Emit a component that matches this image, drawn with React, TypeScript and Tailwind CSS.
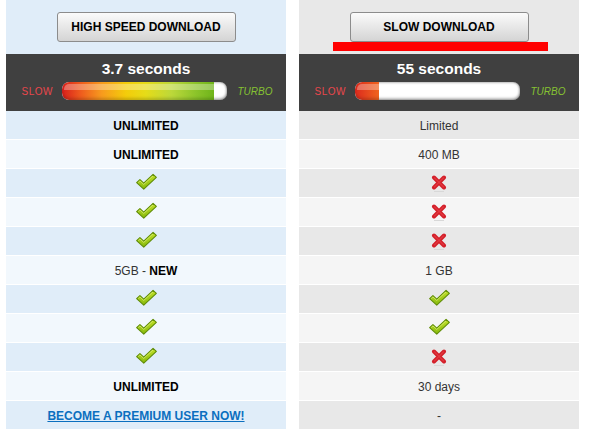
import React from "react";

type Cell =
  | { kind: "bold"; text: string }
  | { kind: "plain"; text: string }
  | { kind: "new" }
  | { kind: "check" }
  | { kind: "cross" }
  | { kind: "link"; text: string };

const premiumRows: Cell[] = [
  { kind: "bold", text: "UNLIMITED" },
  { kind: "bold", text: "UNLIMITED" },
  { kind: "check" },
  { kind: "check" },
  { kind: "check" },
  { kind: "new" },
  { kind: "check" },
  { kind: "check" },
  { kind: "check" },
  { kind: "bold", text: "UNLIMITED" },
  { kind: "link", text: "BECOME A PREMIUM USER NOW!" },
];

const freeRows: Cell[] = [
  { kind: "plain", text: "Limited" },
  { kind: "plain", text: "400 MB" },
  { kind: "cross" },
  { kind: "cross" },
  { kind: "cross" },
  { kind: "plain", text: "1 GB" },
  { kind: "check" },
  { kind: "check" },
  { kind: "cross" },
  { kind: "plain", text: "30 days" },
  { kind: "plain", text: "-" },
];

function CheckIcon() {
  return (
    <svg width="23" height="18" viewBox="0 0 21 16" className="-mt-[3px]">
      <defs>
        <linearGradient id="chk" x1="0" y1="0" x2="0" y2="1">
          <stop offset="0" stopColor="#c4e22a" />
          <stop offset="1" stopColor="#86b90c" />
        </linearGradient>
      </defs>
      <path
        d="M1.5 8.5 L4.5 5.8 L8 9 L16.5 1 L19.5 3.8 L8 14.5 Z"
        fill="url(#chk)"
        stroke="#5f8c06"
        strokeWidth="1"
        strokeLinejoin="round"
      />
      <path d="M3 8.4 L4.5 7 L8 10.2 L16.5 2.3" fill="none" stroke="#e4f48a" strokeWidth="0.8" opacity="0.8" />
    </svg>
  );
}

function CrossIcon() {
  return (
    <svg width="16" height="18" viewBox="0 0 16 18" className="mt-[1px]">
      <path d="M3 16.5 H13" stroke="#d8d8d8" strokeWidth="1" />
      <path d="M3 2.5 L13 12.5 M13 2.5 L3 12.5" stroke="#d4202a" strokeWidth="4" strokeLinecap="round" />
      <path d="M3.5 2.8 L12.5 11.8 M12.5 2.8 L3.5 11.8" stroke="#e8454c" strokeWidth="1.2" strokeLinecap="round" opacity="0.7" />
    </svg>
  );
}

function CellContent({ cell }: { cell: Cell }) {
  switch (cell.kind) {
    case "bold":
      return <span className="pt-[2px] text-[12px] font-bold text-black">{cell.text}</span>;
    case "plain":
      return <span className="pt-[2px] text-[12px] text-[#333]">{cell.text}</span>;
    case "new":
      return (
        <span className="pt-[2px] text-[12px] text-[#333]">
          5GB - <b className="font-bold text-black">NEW</b>
        </span>
      );
    case "check":
      return <CheckIcon />;
    case "cross":
      return <CrossIcon />;
    case "link":
      return (
        <a href="#" className="pt-[2px] text-[12px] font-bold text-[#0b6fbf] underline">
          {cell.text}
        </a>
      );
  }
}

function SpeedBar({ fill, fillClass }: { fill: number; fillClass: string }) {
  return (
    <div className="flex items-center justify-center gap-[11px]">
      <span className="w-[29px] text-[10px] tracking-[0.5px] text-[#e9474c]">SLOW</span>
      <div className="relative w-[165px] h-[18px] rounded-[7px] bg-white overflow-hidden shadow-[inset_0_0_3px_rgba(0,0,0,0.55)]">
        <div className={`h-full rounded-l-[7px] ${fillClass}`} style={{ width: fill }} />
        {/* glossy highlight */}
        <div className="absolute left-[2px] right-[2px] top-[2px] h-[6px] rounded-t-[5px] bg-white/30" />
        <div className="absolute inset-0 rounded-[7px] shadow-[inset_0_-2px_3px_rgba(0,0,0,0.18)]" />
      </div>
      <span className="w-[33px] text-[10px] italic text-[#86c232]">TURBO</span>
    </div>
  );
}

function Column({
  title,
  seconds,
  topBg,
  oddBg,
  evenBg,
  rows,
  fill,
  fillClass,
  marked,
}: {
  title: string;
  seconds: string;
  topBg: string;
  oddBg: string;
  evenBg: string;
  rows: Cell[];
  fill: number;
  fillClass: string;
  marked?: boolean;
}) {
  return (
    <div className="w-[280px] flex flex-col">
      <div className={`relative h-[54px] flex items-center justify-center ${topBg}`}>
        <button className="w-[179px] h-[30px] rounded-[3px] border border-[#8c8c8c] bg-gradient-to-b from-[#fbfbfb] to-[#d4d4d4] text-[12px] font-bold text-black">
          {title}
        </button>
        {marked && <div className="absolute left-[34px] top-[42px] w-[215px] h-[9px] bg-[#ff0000]" />}
      </div>
      <div className="h-[57px] bg-[#404040] flex flex-col items-center pt-[5px]">
        <div className="text-[15.5px] leading-[20px] font-bold text-white">{seconds}</div>
        <div className="mt-[3px]">
          <SpeedBar fill={fill} fillClass={fillClass} />
        </div>
      </div>
      {rows.map((cell, i) => (
        <div
          key={i}
          className={`h-[29px] border-b border-white flex items-center justify-center ${i % 2 === 0 ? oddBg : evenBg}`}
        >
          <CellContent cell={cell} />
        </div>
      ))}
    </div>
  );
}

export default function App() {
  return (
    <div className="w-[591px] h-[437px] bg-white flex gap-[13px] pl-[6px] font-['Liberation_Sans',Arial,sans-serif]">
      <Column
        title="HIGH SPEED DOWNLOAD"
        seconds="3.7 seconds"
        topBg="bg-[#e0edf9]"
        oddBg="bg-[#e0edf9]"
        evenBg="bg-[#f2f8fd]"
        rows={premiumRows}
        fill={152}
        fillClass="bg-[linear-gradient(to_right,#d81f1c,#ee5a1e_12%,#f79a1e_26%,#f4cc0a_42%,#e6dc18_55%,#bcd83a_72%,#8cc42a_88%,#6fb41a)]"
      />
      <Column
        title="SLOW DOWNLOAD"
        seconds="55 seconds"
        topBg="bg-[#e8e8e8]"
        oddBg="bg-[#e8e8e8]"
        evenBg="bg-[#f5f5f5]"
        rows={freeRows}
        fill={24}
        fillClass="bg-[linear-gradient(to_right,#dc2a1e,#f0641e)]"
        marked
      />
    </div>
  );
}
